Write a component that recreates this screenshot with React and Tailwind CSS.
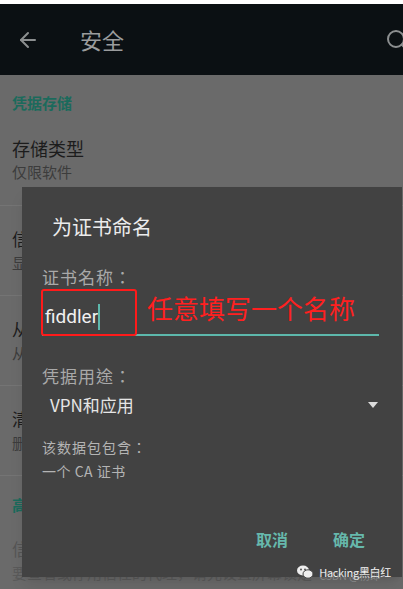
import { ArrowLeft, Search } from "lucide-react";

const font = { fontFamily: '"Noto Sans CJK SC", "Noto Sans", sans-serif' };
const tc = { fontFamily: '"Noto Sans CJK TC", "Noto Sans CJK SC", sans-serif' };

function Item({ title, sub }) {
  return (
    <div className="px-3 h-[90px] flex flex-col justify-center border-b border-[#747474]">
      <div className="text-[17px] leading-6 text-[#1c1c1c]">{title}</div>
      <div className="text-[15px] leading-6 text-[#3c3c3c]">{sub}</div>
    </div>
  );
}

export default function App() {
  return (
    <div className="relative w-[403px] h-[589px] overflow-hidden bg-[#6a6a6a]" style={font}>
      {/* background settings page, dimmed */}
      <div className="h-[4px] bg-white" />
      <div className="h-[71px] bg-[#0b1013] flex items-center px-4">
        <ArrowLeft className="w-6 h-6 text-[#8c8f90]" strokeWidth={2} />
        <div className="ml-10 text-[22px] text-[#9a9c9d]">安全</div>
        <Search className="ml-auto w-6 h-6 text-[#8c8f90] translate-x-[22px]" strokeWidth={2} />
      </div>
      <div className="px-3 pt-[16px] text-[15px] leading-6 text-[#1b6a5c] font-bold">凭据存储</div>
      <div className="px-3 pt-[21px] pb-[21px] border-b border-[#747474]">
        <div className="text-[18px] leading-6 text-[#1c1c1c]">存储类型</div>
        <div className="text-[15px] leading-6 text-[#3c3c3c]">仅限软件</div>
      </div>
      <Item title="信任的凭据" sub="显示受信任的CA证书" />
      <Item title="从存储设备安装" sub="从存储设备安装证书" />
      <Item title="清除凭据" sub="删除所有证书" />
      <div className="px-3 pt-[17px] text-[15px] leading-6 text-[#1b6a5c] font-bold">高级</div>
      <div className="px-3 pt-[20px]">
        <div className="text-[17px] leading-6 text-[#555]">信任的代理</div>
        <div className="text-[15px] leading-6 text-[#5a5a5a]">要查看或停用信任的代理，请先设置屏幕锁定</div>
      </div>

      {/* dialog */}
      <div className="absolute left-[22px] top-[187px] w-[380px] h-[390px] bg-[#424242] shadow-lg">
        <div className="pl-[30px] pt-[26px] text-[20px] leading-7 text-[#ececec]">为证书命名</div>
        <div className="px-5 pt-[24px]">
          <div className="text-[17px] leading-6 text-[#a9a9a9] tracking-[1px]" style={tc}>证书名称：</div>
          <div className="relative mt-[1px] h-[46px] flex items-center border-b-2 border-[#5db8ac] mr-[3px]">
            <div className="absolute -left-px -top-[1px] w-[96px] h-[47px] border-2 border-[#ff1a1a] rounded-[3px]" />
            <span className="pl-[3px] text-[19px] text-[#f0f0f0] translate-y-[5px]" style={{ fontFamily: 'Roboto, "Noto Sans", sans-serif' }}>fiddler</span>
            <span className="w-[2px] h-[26px] bg-[#5db8ac] translate-y-[5px]" />
            <span className="ml-[47px] text-[26px] leading-8 text-[#ff2020] -translate-y-[4px]">任意填写一个名称</span>
          </div>
          <div className="pt-[28px] text-[17px] leading-6 text-[#a9a9a9] tracking-[1px]" style={tc}>凭据用途：</div>
          <div className="pt-[5px] pl-2 pr-[4px] flex items-center">
            <span className="text-[17px] leading-6 text-[#e6e6e6]">VPN和应用</span>
            <span className="ml-auto w-0 h-0 border-l-[5px] border-r-[5px] border-t-[6px] border-l-transparent border-r-transparent border-t-[#dcdcdc]" />
          </div>
          <div className="pt-[18px] text-[14px] leading-6 text-[#b4b4b4] tracking-[1px]" style={tc}>该数据包包含：</div>
          <div className="text-[14px] leading-6 text-[#b4b4b4] tracking-[0.5px]">一个 CA 证书</div>
        </div>
        <div className="flex justify-end gap-[45px] pr-[37px] pt-[44px]">
          <span className="text-[16px] leading-6 font-bold text-[#66b8ac]">取消</span>
          <span className="text-[16px] leading-6 font-bold text-[#66b8ac]">确定</span>
        </div>
        <div className="flex items-center justify-end pr-[11px] pt-[13px] gap-[6px]">
          <svg width="16" height="14" viewBox="0 0 16 14">
            <ellipse cx="6" cy="5.5" rx="6" ry="5" fill="#eee" />
            <ellipse cx="11" cy="9" rx="5" ry="4.2" fill="#eee" stroke="#424242" strokeWidth="1" />
            <circle cx="4" cy="4.5" r="0.9" fill="#424242" />
            <circle cx="8" cy="4.5" r="0.9" fill="#424242" />
          </svg>
          <span className="relative text-[11px] leading-4 text-[#f4f4f4] tracking-[-0.3px]">
            Hacking黑白红
            <span className="absolute left-0 top-[3px] text-[11px] text-[#aaa]/50">CSDN @杨郎</span>
          </span>
        </div>
      </div>
    </div>
  );
}
